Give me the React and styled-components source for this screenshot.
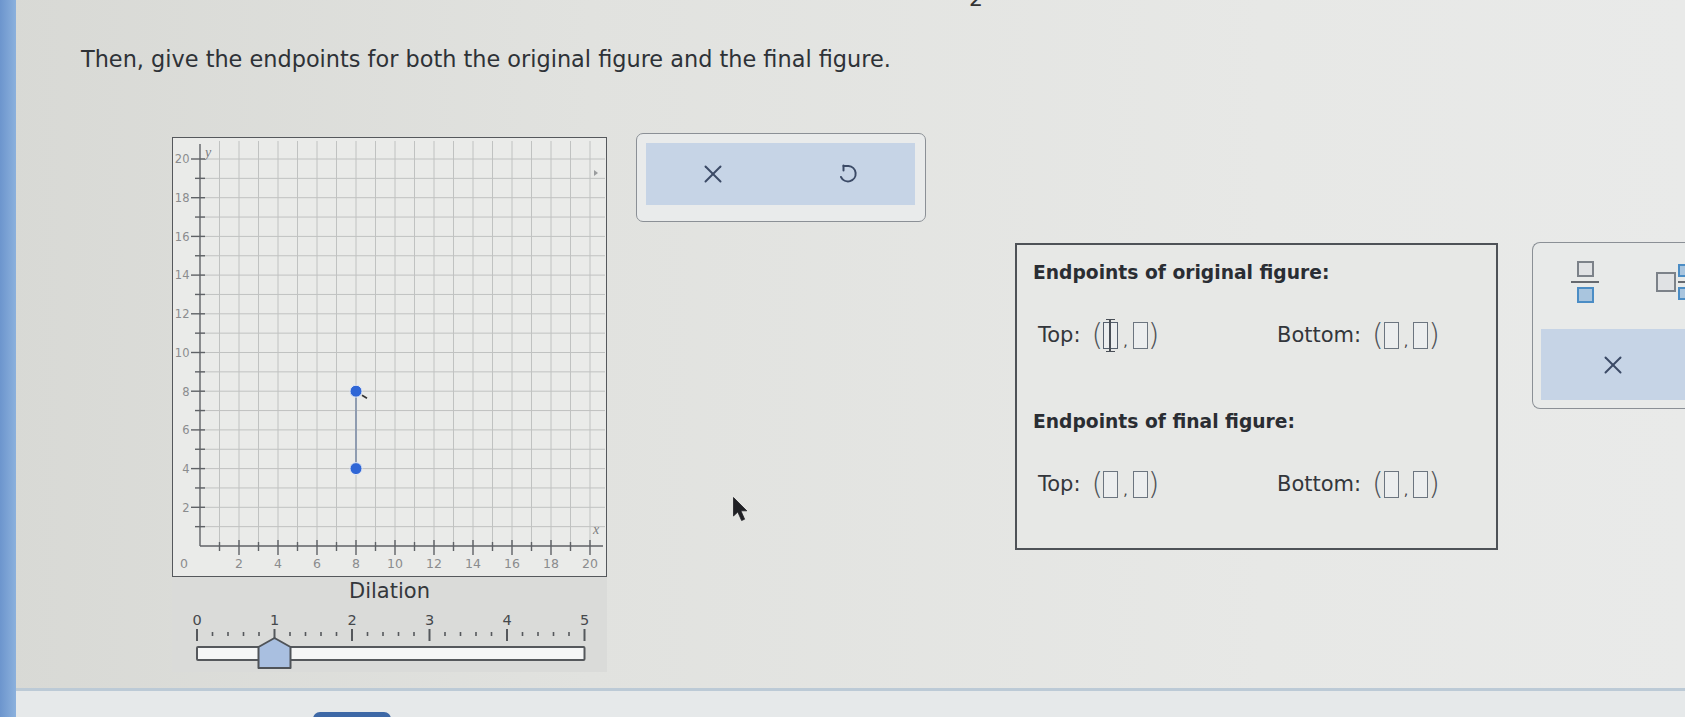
import React from "react";
import styled, { createGlobalStyle } from "styled-components";

const GlobalStyle = createGlobalStyle`
  html, body { margin: 0; padding: 0; }
  body {
    width: 1685px;
    height: 717px;
    overflow: hidden;
    font-family: "DejaVu Sans", Verdana, sans-serif;
    background: #e3e4e1;
  }
`;

const Page = styled.div`
  display: flex;
  width: 1685px;
  height: 717px;
  overflow: hidden;
  background: linear-gradient(90deg, #d8d9d5 0%, #e1e2df 35%, #e7e8e6 75%, #e9eae9 100%);
`;

const Strip = styled.div`
  width: 16px;
  flex: none;
  background: linear-gradient(90deg, #6c95cd, #8cb1dd);
`;

const Main = styled.div`
  flex: 1;
  min-width: 0;
  display: flex;
  flex-direction: column;
  position: relative;
`;

const TopCut = styled.div`
  height: 10px;
  overflow: hidden;
  padding-left: 953px;
`;

const TopGlyph = styled.div`
  margin-top: -12px;
  font-size: 22px;
  line-height: 22px;
  color: #333;
`;

const Prompt = styled.p`
  margin: 36px 0 0 65px;
  font-size: 22.4px;
  line-height: 27px;
  color: #2e3237;
  white-space: nowrap;
`;

const Content = styled.div`
  display: flex;
  align-items: flex-start;
  margin-top: 60px;
`;

const GraphColumn = styled.div`
  margin: 4px 0 0 156px;
  width: 435px;
  flex: none;
`;

const GraphBox = styled.div`
  width: 435px;
  height: 440px;
  box-sizing: border-box;
  border: 1.5px solid #55585c;
  background: #eaebe9;
`;

const SliderPanel = styled.div`
  width: 435px;
  height: 95px;
  background: #dadbd9;
  display: flex;
  flex-direction: column;
  align-items: center;
`;

const SliderTitle = styled.div`
  margin-top: 2px;
  font-size: 21px;
  line-height: 24px;
  color: #34373b;
`;

const ButtonBox = styled.div`
  margin-left: 29px;
  width: 290px;
  height: 89px;
  flex: none;
  box-sizing: border-box;
  border: 1.5px solid #8b9096;
  border-radius: 7px;
  padding: 9px 10px 16px 9px;
  background: #e9ebeb;
`;

const ButtonBar = styled.div`
  display: grid;
  grid-template-columns: ${(p) => p.$cols || "1fr 1fr"};
  height: ${(p) => (p.$h ? `${p.$h}px` : "100%")};
  flex: none;
  background: #c6d4e6;
`;

const IconButton = styled.button`
  display: flex;
  align-items: center;
  justify-content: center;
  border: none;
  background: transparent;
  padding: 0;
  margin: 0;
  color: #3b4a66;
`;

const EndpointsBox = styled.div`
  margin: 110px 0 0 89px;
  width: 483px;
  height: 307px;
  flex: none;
  box-sizing: border-box;
  border: 2px solid #4e5257;
  padding: 17px 0 0 16px;
  background: #e7e8e6;
`;

const Heading = styled.h3`
  margin: ${(p) => p.$mt || 0}px 0 0 0;
  font-size: 18.7px;
  line-height: 22px;
  font-weight: 700;
  color: #2a2d33;
`;

const CoordRow = styled.div`
  display: grid;
  grid-template-columns: 239px auto;
  align-items: center;
  height: 36px;
  margin-top: ${(p) => p.$mt}px;
  padding-left: 5px;
`;

const Pair = styled.div`
  display: flex;
  align-items: center;
`;

const Label = styled.span`
  font-size: 21px;
  line-height: 25px;
  color: #33363b;
`;

const Coord = styled.span`
  display: flex;
  align-items: center;
  margin-left: 11px;
`;

const Paren = styled.span`
  font-size: 30px;
  line-height: 36px;
  font-weight: 200;
  color: #4f5358;
`;

const Comma = styled.span`
  font-size: 14px;
  line-height: 14px;
  margin: 12px 5px 0;
  color: #444;
`;

const AnswerBox = styled.span`
  position: relative;
  display: block;
  width: 15px;
  height: 27px;
  box-sizing: border-box;
  border: 1.5px solid ${(p) => (p.$focused ? "#56606e" : "#6c7580")};
  background: #eceeef;
  ${(p) =>
    p.$focused &&
    `
    &::before {
      content: "";
      position: absolute;
      left: 5px;
      top: -4px;
      bottom: -4px;
      width: 1.5px;
      background: #4a4f57;
    }
    &::after {
      content: "";
      position: absolute;
      left: 2px;
      right: 2px;
      top: -4px;
      bottom: -4px;
      border-top: 1.5px solid #4a4f57;
      border-bottom: 1.5px solid #4a4f57;
    }
  `}
`;

const RightPanel = styled.div`
  margin: 109px 0 0 34px;
  width: 220px;
  height: 167px;
  flex: none;
  box-sizing: border-box;
  border: 1.5px solid #8b9096;
  border-right: none;
  border-radius: 8px 0 0 8px;
  padding: 0 0 7px 8px;
  display: flex;
  flex-direction: column;
  background: #e8eae9;
`;

const IconRow = styled.div`
  height: 78px;
  margin-bottom: 8px;
  flex: none;
  display: flex;
  align-items: center;
  padding-left: 30px;
  gap: 57px;
`;

const FracIcon = styled.div`
  display: flex;
  flex-direction: column;
  align-items: center;
  width: ${(p) => p.$w}px;
  gap: 4px;
`;

const FracCell = styled.span`
  display: block;
  width: ${(p) => p.$s}px;
  height: ${(p) => p.$s - 1}px;
  box-sizing: border-box;
  border: 2.5px solid ${(p) => (p.$blue ? "#4b8dc5" : "#7c8289")};
  background: ${(p) => (p.$blue ? "#a9c5de" : "#e0e2e4")};
`;

const FracBar = styled.span`
  display: block;
  width: 100%;
  height: 2px;
  background: #666a70;
`;

const MixedIcon = styled.div`
  display: flex;
  align-items: center;
  gap: 2px;
`;

const WholeCell = styled.span`
  display: block;
  width: 20px;
  height: 20px;
  box-sizing: border-box;
  border: 2.5px solid #7c8289;
  background: #e0e2e4;
`;

const Footer = styled.div`
  margin-top: auto;
  height: 26px;
  border-top: 3px solid #bccad6;
  background: #e6e9ea;
  padding-left: 297px;
  overflow: hidden;
`;

const FooterButton = styled.div`
  margin-top: 21px;
  width: 78px;
  height: 12px;
  border-radius: 7px 7px 0 0;
  background: #3d68a6;
`;

const Pointer = styled.svg`
  position: absolute;
  left: 717px;
  top: 497px;
`;

/* ---------- graph ---------- */
const OX = 27;
const OY = 408;
const UX = 19.5;
const UY = 19.35;
const GW = 432;

function Graph() {
  const vLines = [];
  for (let i = 1; i <= 20; i++) {
    const x = OX + i * UX;
    vLines.push(<line key={"v" + i} x1={x} y1={3} x2={x} y2={OY} />);
  }
  const hLines = [];
  for (let j = 1; j <= 20; j++) {
    const y = OY - j * UY;
    hLines.push(<line key={"h" + j} x1={OX} y1={y} x2={GW} y2={y} />);
  }
  const yTicks = [];
  const xTicks = [];
  const labels = [];
  for (let k = 1; k <= 20; k++) {
    const even = k % 2 === 0;
    const y = OY - k * UY;
    const x = OX + k * UX;
    yTicks.push(<line key={"yt" + k} x1={even ? OX - 9 : OX - 5} y1={y} x2={OX + 5} y2={y} />);
    xTicks.push(<line key={"xt" + k} x1={x} y1={even ? OY - 6 : OY - 4} x2={x} y2={even ? OY + 9 : OY + 5} />);
    if (even) {
      labels.push(
        <text key={"yl" + k} x={16.5} y={y + 4.3} textAnchor="end">
          {k}
        </text>
      );
      labels.push(
        <text key={"xl" + k} x={x} y={OY + 22} textAnchor="middle" fontSize="12.5">
          {k}
        </text>
      );
    }
  }
  const p1 = { x: OX + 8 * UX, y: OY - 8 * UY };
  const p2 = { x: OX + 8 * UX, y: OY - 4 * UY };
  return (
    <svg width="432" height="437" viewBox="0 0 432 437" style={{ display: "block" }}>
      <g stroke="#c0c2c1" strokeWidth="1">
        {vLines}
        {hLines}
      </g>
      <g stroke="#5f6266" strokeWidth="1.4">
        <line x1={OX} y1={OY} x2={OX} y2={6} />
        <line x1={OX} y1={OY} x2={430} y2={OY} />
        {yTicks}
        {xTicks}
      </g>
      <g fill="#8a8c8e" fontSize="11.5" fontFamily="DejaVu Sans, sans-serif">
        {labels}
        <text x={11} y={OY + 22} textAnchor="middle" fontSize="12.5">0</text>
      </g>
      <text x={32} y={19} fontSize="14" fontStyle="italic" fill="#7a7c7e" fontFamily="Liberation Serif, serif">y</text>
      <text x={420} y={396} fontSize="14" fontStyle="italic" fill="#7a7c7e" fontFamily="Liberation Serif, serif">x</text>
      <path d="M421 32 L425 35 L421 38 Z" fill="#9a9c9e" />
      <line x1={p1.x} y1={p1.y} x2={p2.x} y2={p2.y} stroke="#8f9cb0" strokeWidth="2" />
      <circle cx={p1.x} cy={p1.y} r="6" fill="#2f66d6" stroke="#dfe6f4" strokeWidth="1" />
      <circle cx={p2.x} cy={p2.y} r="6" fill="#2f66d6" stroke="#dfe6f4" strokeWidth="1" />
      <line x1={p1.x + 6} y1={p1.y + 4} x2={p1.x + 11} y2={p1.y + 7} stroke="#333" strokeWidth="1.6" />
    </svg>
  );
}

/* ---------- slider ---------- */
const SX0 = 25;
const SU = 77.5;

function Slider({ value }) {
  const ticks = [];
  for (let i = 0; i <= 25; i++) {
    const x = SX0 + (i * SU) / 5;
    const major = i % 5 === 0;
    ticks.push(
      <line
        key={i}
        x1={x}
        y1={major ? 26 : 29}
        x2={x}
        y2={major ? 38 : 33}
        strokeWidth={major ? 2 : 1.6}
      />
    );
  }
  const nums = [0, 1, 2, 3, 4, 5].map((n) => (
    <text key={n} x={SX0 + n * SU} y={22} textAnchor="middle">
      {n}
    </text>
  ));
  const tx = SX0 + value * SU;
  return (
    <svg width="435" height="69" viewBox="0 0 435 69" style={{ display: "block" }}>
      <g fill="#45484c" fontSize="14.5" fontFamily="DejaVu Sans, sans-serif">
        {nums}
      </g>
      <g stroke="#55585c">{ticks}</g>
      <rect x={SX0} y={44} width={5 * SU} height={13} fill="#f5f6f6" stroke="#55585c" strokeWidth="2" rx="1" />
      <path
        d={`M${tx} 35 L${tx + 16} 44 L${tx + 16} 65 L${tx - 16} 65 L${tx - 16} 44 Z`}
        fill="#a9bfe0"
        stroke="#4f5358"
        strokeWidth="2"
        strokeLinejoin="round"
      />
    </svg>
  );
}

/* ---------- icons ---------- */
const XIcon = ({ size = 20 }) => (
  <svg width={size} height={size} viewBox="0 0 20 20" fill="none" stroke="#3b4a66" strokeWidth="2" strokeLinecap="round">
    <line x1="2.5" y1="2.5" x2="17.5" y2="17.5" />
    <line x1="17.5" y1="2.5" x2="2.5" y2="17.5" />
  </svg>
);

const UndoIcon = () => (
  <svg width="22" height="22" viewBox="0 0 22 22" fill="none" stroke="#3b4a66" strokeWidth="2" strokeLinecap="round" strokeLinejoin="round">
    <path d="M6.5 2.5 V7.5" />
    <path d="M6.5 3 H11.5 A7.7 7.7 0 1 1 4 14" />
  </svg>
);

function AnswerPair({ focused }) {
  return (
    <Coord>
      <Paren>(</Paren>
      <AnswerBox $focused={focused} />
      <Comma>,</Comma>
      <AnswerBox />
      <Paren>)</Paren>
    </Coord>
  );
}

function EndpointRow({ mt, focused }) {
  return (
    <CoordRow $mt={mt}>
      <Pair>
        <Label>Top:</Label>
        <AnswerPair focused={focused} />
      </Pair>
      <Pair>
        <Label>Bottom:</Label>
        <AnswerPair />
      </Pair>
    </CoordRow>
  );
}

export default function App() {
  return (
    <>
      <GlobalStyle />
      <Page>
        <Strip />
        <Main>
          <TopCut>
            <TopGlyph>2</TopGlyph>
          </TopCut>
          <Prompt>Then, give the endpoints for both the original figure and the final figure.</Prompt>
          <Content>
            <GraphColumn>
              <GraphBox>
                <Graph />
              </GraphBox>
              <SliderPanel>
                <SliderTitle>Dilation</SliderTitle>
                <Slider value={1} />
              </SliderPanel>
            </GraphColumn>

            <ButtonBox>
              <ButtonBar>
                <IconButton aria-label="Clear">
                  <XIcon />
                </IconButton>
                <IconButton aria-label="Undo">
                  <UndoIcon />
                </IconButton>
              </ButtonBar>
            </ButtonBox>

            <EndpointsBox>
              <Heading>Endpoints of original figure:</Heading>
              <EndpointRow mt={33} focused />
              <Heading $mt={58}>Endpoints of final figure:</Heading>
              <EndpointRow mt={33} />
            </EndpointsBox>

            <RightPanel>
              <IconRow>
                <FracIcon $w={28}>
                  <FracCell $s={17} />
                  <FracBar />
                  <FracCell $s={17} $blue />
                </FracIcon>
                <MixedIcon>
                  <WholeCell />
                  <FracIcon $w={14}>
                    <FracCell $s={14} $blue />
                    <FracBar />
                    <FracCell $s={14} $blue />
                  </FracIcon>
                </MixedIcon>
              </IconRow>
              <ButtonBar $cols="144px 144px" $h={71}>
                <IconButton aria-label="Clear">
                  <XIcon />
                </IconButton>
                <IconButton />
              </ButtonBar>
            </RightPanel>
          </Content>
          <Footer>
            <FooterButton />
          </Footer>
          <Pointer width="15" height="26" viewBox="0 0 15 26">
            <path d="M0.5 0.5 L0.5 19 L4.8 15 L8.6 23.5 L11.6 22.2 L7.9 13.8 L13.8 13.8 Z" fill="#1f2024" stroke="#1f2024" strokeWidth="0.8" strokeLinejoin="round" />
          </Pointer>
        </Main>
      </Page>
    </>
  );
}
